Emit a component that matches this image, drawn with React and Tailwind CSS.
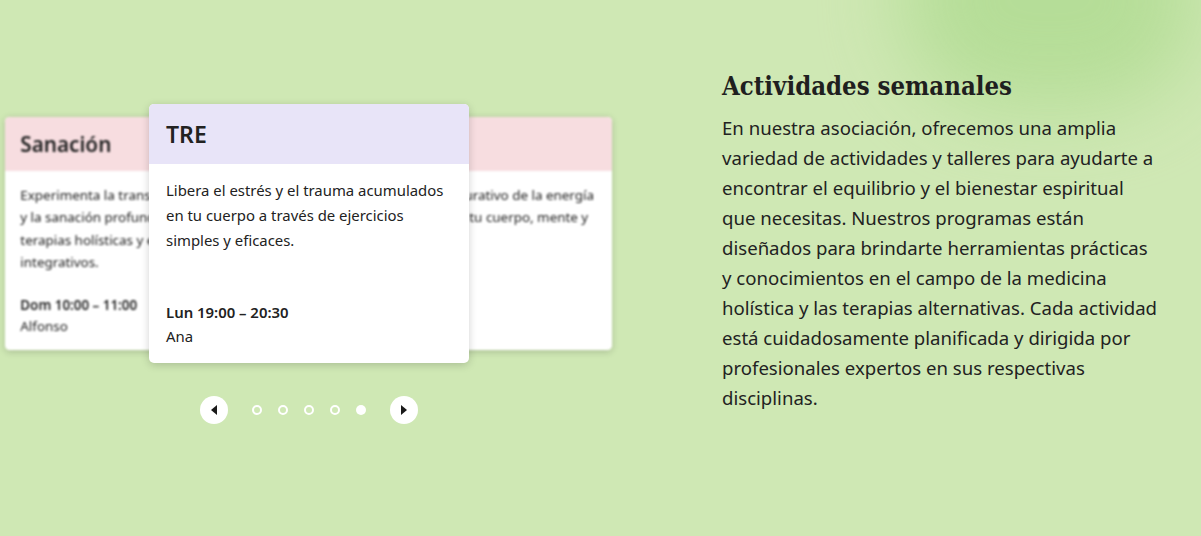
import React from "react";

const sans = { fontFamily: '"Noto Sans", sans-serif' };

function Card({ title, headerBg, desc, time, person }) {
  return (
    <div className="absolute top-0 left-0 w-[320px] h-[259px] bg-white rounded-[5px] shadow-[0_2px_8px_rgba(0,0,0,0.18)] overflow-hidden flex flex-col">
      <div className={`h-[60px] shrink-0 flex items-center px-[17px] ${headerBg}`}>
        <span className="text-[23px] font-semibold text-[#222]">{title}</span>
      </div>
      <div className="flex-1 flex flex-col justify-between px-[17px] pt-[14px] pb-[15px]">
        <p className="text-[14.9px] leading-[25px] text-[#222]">{desc}</p>
        <div className="text-[14.9px] leading-[24px] text-[#222]">
          <div className="font-semibold">{time}</div>
          <div>{person}</div>
        </div>
      </div>
    </div>
  );
}

export default function App() {
  return (
    <div className="relative w-[1201px] h-[536px] bg-[#cfe8b4] overflow-hidden" style={sans}>
      <div className="absolute -top-[110px] left-[900px] w-[300px] h-[220px] rounded-full bg-[#b3dc95] blur-[40px] opacity-90" />
      <div className="relative flex">
        <div className="w-[617px] pt-[104px] flex flex-col items-center">
          <div className="relative w-[617px] h-[259px]">
            <div className="absolute left-[-11px] top-0 w-[320px] h-[259px] scale-90 blur-[1.2px]">
              <Card
                title="Sanación"
                headerBg="bg-[#f7dde0]"
                desc={<>Experimenta la transformación personal<br />y la sanación profunda a través de<br />terapias holísticas y enfoques<br />integrativos.</>}
                time="Dom 10:00 – 11:00"
                person="Alfonso"
              />
            </div>
            <div className="absolute left-[308px] top-0 w-[320px] h-[259px] scale-90 blur-[1.2px]">
              <Card
                title="Reiki"
                headerBg="bg-[#f7dde0]"
                desc={<>Descubre el poder curativo de la energía<br />Reiki para equilibrar tu cuerpo, mente y<br />espíritu.</>}
                time=""
                person=""
              />
            </div>
            <div className="absolute left-[149px] top-0 w-[320px] h-[259px]">
              <Card
                title="TRE"
                headerBg="bg-[#e8e4f8]"
                desc="Libera el estrés y el trauma acumulados en tu cuerpo a través de ejercicios simples y eficaces."
                time="Lun 19:00 – 20:30"
                person="Ana"
              />
            </div>
          </div>
          <div className="mt-[33px] flex items-center">
            <button className="w-[28px] h-[28px] rounded-full bg-white flex items-center justify-center">
              <svg width="10" height="12" viewBox="0 0 10 12"><path d="M8 1 L2 6 L8 11 Z" fill="#1a1a1a" /></svg>
            </button>
            <div className="mx-[24px] flex items-center gap-[16px]">
              <span className="w-[10px] h-[10px] rounded-full border-2 border-white" />
              <span className="w-[10px] h-[10px] rounded-full border-2 border-white" />
              <span className="w-[10px] h-[10px] rounded-full border-2 border-white" />
              <span className="w-[10px] h-[10px] rounded-full border-2 border-white" />
              <span className="w-[10px] h-[10px] rounded-full bg-white" />
            </div>
            <button className="w-[28px] h-[28px] rounded-full bg-white flex items-center justify-center">
              <svg width="10" height="12" viewBox="0 0 10 12"><path d="M2 1 L8 6 L2 11 Z" fill="#1a1a1a" /></svg>
            </button>
          </div>
        </div>
        <div className="ml-[105px] w-[437px] pt-[69px]">
          <h2 className="text-[25.5px] leading-[34px] font-bold text-[#1f1f1f] mb-[10px]" style={{ fontFamily: '"DejaVu Serif Condensed", "DejaVu Serif", serif' }}>
            Actividades semanales
          </h2>
          <p className="text-[18.6px] leading-[30px] text-[#222]">
            En nuestra asociación, ofrecemos una amplia variedad de actividades y talleres para ayudarte a encontrar el equilibrio y el bienestar espiritual que necesitas. Nuestros programas están diseñados para brindarte herramientas prácticas y conocimientos en el campo de la medicina holística y las terapias alternativas. Cada actividad está cuidadosamente planificada y dirigida por profesionales expertos en sus respectivas disciplinas.
          </p>
        </div>
      </div>
    </div>
  );
}
